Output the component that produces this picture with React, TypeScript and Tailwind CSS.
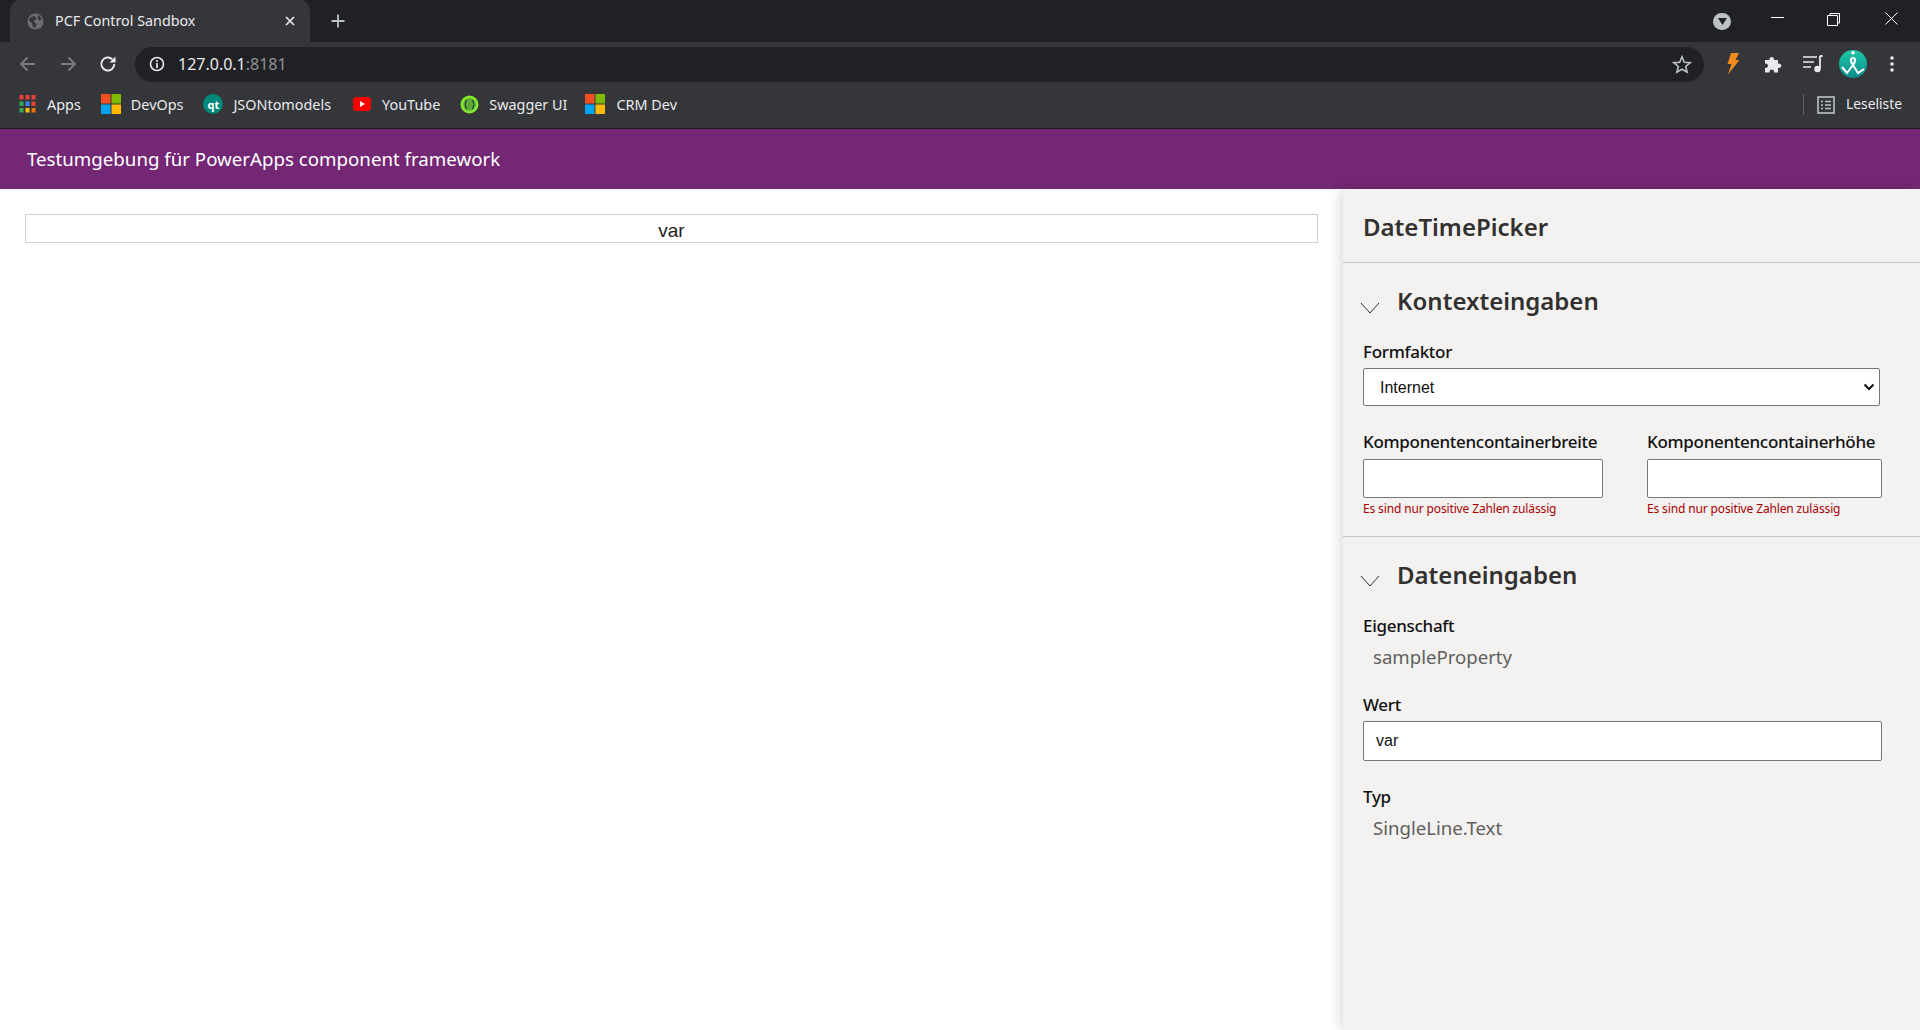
const segoe = "font-['Noto_Sans','Open_Sans',sans-serif]";

function MsLogo() {
  return (
    <svg width="20" height="20" viewBox="0 0 20 20" className="shrink-0">
      <rect x="0" y="0" width="9.5" height="9.5" fill="#f25022" />
      <rect x="10.5" y="0" width="9.5" height="9.5" fill="#7fba00" />
      <rect x="0" y="10.5" width="9.5" height="9.5" fill="#00a4ef" />
      <rect x="10.5" y="10.5" width="9.5" height="9.5" fill="#ffb900" />
    </svg>
  );
}

function AppsIcon() {
  const colors = ["#ea4335", "#ea4335", "#ea4335", "#34a853", "#4285f4", "#ea4335", "#34a853", "#fbbc05", "#e8710a"];
  return (
    <svg width="17" height="18" viewBox="0 0 16 18" className="shrink-0">
      {colors.map((c, i) => (
        <rect key={i} x={(i % 3) * 6} y={Math.floor(i / 3) * 6.5} width="4" height="4.5" fill={c} />
      ))}
    </svg>
  );
}

function Bookmark({ icon, label, gap }: { icon: React.ReactNode; label: string; gap: string }) {
  return (
    <div className={`flex items-center ${gap}`}>
      {icon}
      <span className="text-[14.4px] text-[#e8eaed]">{label}</span>
    </div>
  );
}

function Chevron() {
  return (
    <svg width="20" height="12" viewBox="0 0 20 12" className="mt-[11px] shrink-0">
      <path d="M1 1 L10 11 L19 1" fill="none" stroke="#323130" strokeWidth="1" />
    </svg>
  );
}

function Label({ children, className = "" }: { children: React.ReactNode; className?: string }) {
  return <div className={`text-[17px] leading-[22px] font-medium tracking-[-0.3px] text-[#111] ${className}`}>{children}</div>;
}

function ErrorText() {
  return <div className="mt-[3px] text-[12px] leading-4 tracking-[-0.14px] text-[#a80000]">Es sind nur positive Zahlen zulässig</div>;
}

export default function App() {
  return (
    <div className={`flex h-[1030px] w-[1920px] flex-col overflow-hidden bg-white ${segoe}`}>
      {/* tab strip */}
      <div className="flex h-[42px] shrink-0 items-end bg-[#202124] pl-[10px] pr-[22px]">
        <div className="flex h-[42px] w-[300px] items-center rounded-t-[10px] bg-[#35363a] pl-[17px] pr-[14px]">
          <svg width="17" height="17" viewBox="0 0 18 18" className="shrink-0">
            <circle cx="9" cy="9" r="8.5" fill="#6c6d70" />
            <path d="M3 5 L8 3 L10 6 L7 9 L10 12 L9 16 L6 14 L5 10 L2 8 Z M12 2 L16 6 L13 8 L11 5 Z" fill="#35363a" />
          </svg>
          <span className="ml-[11px] flex-1 text-[14.3px] text-[#e8eaed]">PCF Control Sandbox</span>
          <svg width="12" height="12" viewBox="0 0 12 12">
            <path d="M2 2 L10 10 M10 2 L2 10" stroke="#e8eaed" strokeWidth="1.7" />
          </svg>
        </div>
        <svg width="16" height="16" viewBox="0 0 16 16" className="mb-[13px] ml-[20px]">
          <path d="M8 1.5 V14.5 M1.5 8 H14.5" stroke="#bdc1c6" strokeWidth="1.8" />
        </svg>
        <div className="flex-1" />
        <div className="mb-[12px] mr-[40px] flex h-[17px] w-[18px] items-center justify-center rounded-full bg-[#bdc1c6]">
          <svg width="9" height="7" viewBox="0 0 9 7">
            <path d="M0 0 H9 L4.5 7 Z" fill="#202124" />
          </svg>
        </div>
        <div className="mb-[24px] mr-[43px] h-px w-[13px] bg-white" />
        <svg width="13" height="13" viewBox="0 0 13 13" className="mb-[16px] mr-[45px]">
          <path d="M3 2.5 V0.5 H12.5 V10 H10.5 M0.5 2.5 H10.5 V12.5 H0.5 Z" fill="none" stroke="#fff" />
        </svg>
        <svg width="13" height="13" viewBox="0 0 13 13" className="mb-[17px]">
          <path d="M0.5 0.5 L12.5 12.5 M12.5 0.5 L0.5 12.5" stroke="#fff" strokeWidth="1" />
        </svg>
      </div>

      {/* toolbar */}
      <div className="flex h-[44px] shrink-0 items-center bg-[#35363a] pl-[19px] pr-[25px]">
        <svg width="18" height="16" viewBox="0 0 18 16">
          <path d="M16 8 H2 M8.5 1.5 L2 8 L8.5 14.5" fill="none" stroke="#7b7c7f" strokeWidth="1.8" />
        </svg>
        <svg width="18" height="16" viewBox="0 0 18 16" className="ml-[22px]">
          <path d="M2 8 H16 M9.5 1.5 L16 8 L9.5 14.5" fill="none" stroke="#7b7c7f" strokeWidth="1.8" />
        </svg>
        <svg width="18" height="18" viewBox="0 0 18 18" className="ml-[22px]">
          <path d="M15.3 9 A6.5 6.5 0 1 1 13.4 4.4" fill="none" stroke="#e8eaed" strokeWidth="1.9" />
          <path d="M16.5 1.5 V7.5 H10.5 Z" fill="#e8eaed" />
        </svg>
        <div className="ml-[18px] flex h-[35px] flex-1 items-center rounded-full bg-[#202124] pl-[14px] pr-[12px]">
          <svg width="16" height="16" viewBox="0 0 16 16" className="shrink-0">
            <circle cx="8" cy="8" r="6.5" fill="none" stroke="#e8eaed" strokeWidth="1.6" />
            <path d="M8 7 V12 M8 4 V5.8" stroke="#e8eaed" strokeWidth="1.7" />
          </svg>
          <span className="ml-[13px] flex-1 text-[16px] text-[#e8eaed]">
            127.0.0.1<span className="text-[#8f9194]">:8181</span>
          </span>
          <svg width="20" height="19" viewBox="0 0 20 19">
            <path d="M10 1.8 L12.3 7.2 L18.2 7.7 L13.7 11.5 L15.1 17.2 L10 14.2 L4.9 17.2 L6.3 11.5 L1.8 7.7 L7.7 7.2 Z" fill="none" stroke="#bdc1c6" strokeWidth="1.6" />
          </svg>
        </div>
        <svg width="14" height="22" viewBox="0 0 14 22" className="ml-[22px]">
          <path d="M5 0 H13 L9.5 7 H13.5 L2 21.5 L5.5 11 H1.5 Z" fill="#f48a1c" />
        </svg>
        <svg width="19" height="18" viewBox="0 0 19 18" className="ml-[24px]">
          <path d="M1 5 H5.5 C5 1 10.5 1 10 5 H14 V8.5 C18.5 8 18.5 13.5 14 13 V17.5 H10 C10.5 13.5 5 13.5 5.5 17.5 H1 V13 C5 13.5 5 8 1 8.5 Z" fill="#e8eaed" />
        </svg>
        <svg width="20" height="18" viewBox="0 0 20 18" className="ml-[20px]">
          <path d="M0 2 H14 M0 7 H11 M0 12 H8" stroke="#e8eaed" strokeWidth="1.7" />
          <path d="M17 1 H19.5 M17 1 V13.5" stroke="#e8eaed" strokeWidth="1.8" />
          <circle cx="14.5" cy="14" r="3.2" fill="#e8eaed" />
        </svg>
        <div className="ml-[16px] h-[28px] w-[28px] rounded-full bg-gradient-to-b from-[#1fc9a8] to-[#0f8a8c]">
          <svg width="28" height="28" viewBox="0 0 28 28">
            <circle cx="14" cy="2.8" r="1.8" fill="#fff" />
            <path d="M3 17 L8 23 L14 15 C17 11 16.5 8 14 8 C11.5 8 11 11 14 15 L19 23 L25 19" fill="none" stroke="#fff" strokeWidth="2" />
          </svg>
        </div>
        <svg width="6" height="18" viewBox="0 0 6 18" className="ml-[22px]">
          <circle cx="3" cy="3" r="1.8" fill="#e8eaed" />
          <circle cx="3" cy="9" r="1.8" fill="#e8eaed" />
          <circle cx="3" cy="15" r="1.8" fill="#e8eaed" />
        </svg>
      </div>

      {/* bookmarks bar */}
      <div className="flex h-[43px] shrink-0 items-center border-b border-[#1c1c1e] bg-[#35363a] pb-[5px] pl-[19px] pr-[18px]">
        <div className="flex items-center gap-[20px]">
          <Bookmark icon={<AppsIcon />} label="Apps" gap="gap-[11px]" />
          <Bookmark icon={<MsLogo />} label="DevOps" gap="gap-[10px]" />
          <Bookmark
            icon={
              <span className="flex h-[20px] w-[20px] items-center justify-center rounded-full bg-[#00897b] text-[11px] font-bold leading-none text-white">qt</span>
            }
            label="JSONtomodels"
            gap="gap-[10px]"
          />
          <Bookmark
            icon={
              <svg width="18" height="14" viewBox="0 0 18 14">
                <rect width="18" height="14" rx="3.5" fill="#ff0000" />
                <path d="M7 4 L12 7 L7 10 Z" fill="#fff" />
              </svg>
            }
            label="YouTube"
            gap="ml-[2px] gap-[11px]"
          />
          <Bookmark
            icon={
              <svg width="19" height="19" viewBox="0 0 19 19">
                <circle cx="9.5" cy="9.5" r="9" fill="#85ea2d" />
                <circle cx="9.5" cy="9.5" r="6.3" fill="#173647" opacity="0.35" />
                <path d="M7 5 C5 5 6.5 9.5 4.5 9.5 C6.5 9.5 5 14 7 14 M12 5 C14 5 12.5 9.5 14.5 9.5 C12.5 9.5 14 14 12 14" fill="none" stroke="#173647" strokeWidth="1.1" />
              </svg>
            }
            label="Swagger UI"
            gap="gap-[10px]"
          />
          <Bookmark icon={<MsLogo />} label="CRM Dev" gap="-ml-[2px] gap-[11px]" />
        </div>
        <div className="flex-1" />
        <div className="mr-[13px] h-[21px] w-px bg-[#5f6368]" />
        <svg width="18" height="18" viewBox="0 0 18 18" className="mr-[11px]">
          <rect x="1" y="1" width="16" height="16" fill="none" stroke="#bdc1c6" strokeWidth="1.6" />
          <path d="M4 5.5 H6 M8 5.5 H14 M4 9 H6 M8 9 H14 M4 12.5 H6 M8 12.5 H14" stroke="#bdc1c6" strokeWidth="1.5" />
        </svg>
        <span className="text-[13.8px] text-[#e8eaed]">Leseliste</span>
      </div>

      {/* page header */}
      <div className="flex h-[60px] shrink-0 items-center bg-[#742774] pl-[27px] text-[18.7px] text-white">
        Testumgebung für PowerApps component framework
      </div>

      {/* page body */}
      <div className="flex min-h-0 flex-1">
        <div className="flex-1 pl-[25px] pr-[25px] pt-[25px]">
          <div className="flex h-[29px] items-center justify-center border border-[#cfcfcf] pt-[6px] font-['Liberation_Sans',sans-serif] text-[19px] text-[#222]">
            var
          </div>
        </div>

        <div className="w-[577px] shrink-0 bg-[#f3f2f1] text-[#323130] shadow-[-4px_0_10px_rgba(0,0,0,0.12)]">
          <div className="flex h-[74px] items-center border-b border-[#c8c6c4] pl-[20px] pt-[2px] text-[24px] font-semibold">
            DateTimePicker
          </div>

          <div className="h-[274px] border-b border-[#c8c6c4]">
            <div className="flex h-[78px] items-center pl-[17px]">
              <Chevron />
              <span className="-mt-[2px] ml-[17px] text-[24px] font-semibold">Kontexteingaben</span>
            </div>
            <div className="pl-[20px]">
              <Label>Formfaktor</Label>
              <div className="relative mt-[5px] w-[517px]">
                <div className="flex h-[38px] items-center rounded-[2px] border border-[#767676] bg-white pl-[16px] pt-[2px] font-['Liberation_Sans',sans-serif] text-[16px] text-[#111]">
                  Internet
                </div>
                <svg width="12" height="8" viewBox="0 0 12 8" className="absolute right-[5px] top-[15px]">
                  <path d="M1.5 1.5 L6 6 L10.5 1.5" fill="none" stroke="#111" strokeWidth="2" />
                </svg>
              </div>
              <div className="mt-[25px] flex">
                <div className="w-[240px]">
                  <Label>Komponentencontainerbreite</Label>
                  <div className="mt-[6px] h-[39px] rounded-[2px] border border-[#767676] bg-white" />
                  <ErrorText />
                </div>
                <div className="ml-[44px] w-[235px]">
                  <Label>Komponentencontainerhöhe</Label>
                  <div className="mt-[6px] h-[39px] rounded-[2px] border border-[#767676] bg-white" />
                  <ErrorText />
                </div>
              </div>
            </div>
          </div>

          <div>
            <div className="flex h-[76px] items-center pl-[17px]">
              <Chevron />
              <span className="ml-[17px] text-[24px] font-semibold">Dateneingaben</span>
            </div>
            <div className="pl-[20px]">
              <Label className="mt-[2px]">Eigenschaft</Label>
              <div className="mt-[8px] pl-[10px] text-[18.6px] leading-[24px] text-[#605e5c]">sampleProperty</div>
              <Label className="mt-[25px]">Wert</Label>
              <div className="mt-[5px] flex h-[40px] w-[519px] items-center rounded-[2px] border border-[#767676] bg-white pb-[1px] pl-[12px] font-['Liberation_Sans',sans-serif] text-[16px] text-[#111]">
                var
              </div>
              <Label className="mt-[25px]">Typ</Label>
              <div className="mt-[8px] pl-[10px] text-[18.6px] leading-[24px] text-[#605e5c]">SingleLine.Text</div>
            </div>
          </div>
        </div>
      </div>
    </div>
  );
}
